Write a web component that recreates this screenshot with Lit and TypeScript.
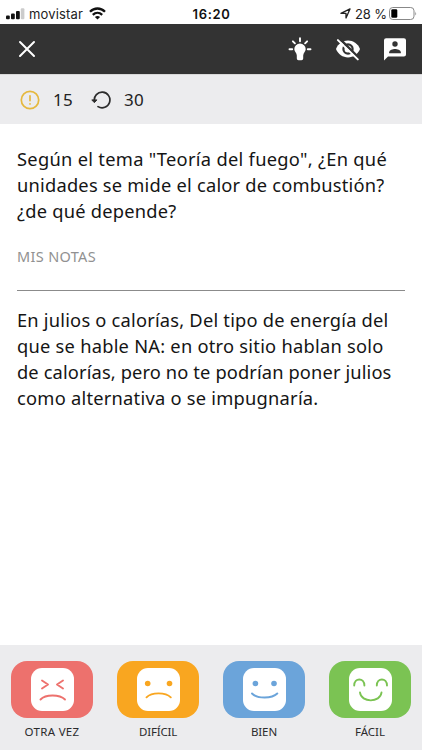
import { LitElement, html, css, svg } from "lit";
import { customElement, property, state, query } from "lit/decorators.js";

/** One line of text whose tracking is adjusted so that it fills a given width. */
@customElement("fit-line")
class FitLine extends LitElement {
  @property() text = "";
  @property({ type: Number }) width = 0;
  @state() private tracking = 0;
  @query("span") private span!: HTMLSpanElement;

  static styles = css`
    :host { display: block; white-space: nowrap; }
    span { display: inline-block; }
  `;

  firstUpdated() {
    const natural = this.span.getBoundingClientRect().width;
    this.tracking = (this.width - natural) / this.text.length;
  }

  render() {
    return html`<span style="letter-spacing:${this.tracking}px">${this.text}</span>`;
  }
}

const line = (text: string, width: number) =>
  html`<fit-line .text=${text} .width=${width}></fit-line>`;

const question: [string, number][] = [
  ['Según el tema "Teoría del fuego", ¿En qué', 370],
  ["unidades se mide el calor de combustión?", 367.5],
  ["¿de qué depende?", 159.5],
];

const answer: [string, number][] = [
  ["En julios o calorías, Del tipo de energía del", 371.5],
  ["que se hable NA: en otro sitio hablan solo", 366.5],
  ["de calorías, pero no te podrían poner julios", 374.5],
  ["como alternativa o se impugnaría.", 301.5],
];

const grades = [
  {
    label: "OTRA VEZ", width: 55, tone: "again",
    face: svg`<path d="M11 12.5l6 4-6 4M32 12.5l-6 4 6 4"/><path d="M9.5 31.5c5-5.3 19-5.3 24.5 0"/>`,
  },
  {
    label: "DIFÍCIL", width: 38, tone: "hard",
    face: svg`<circle class="dot" cx="10.7" cy="15.5" r="2.8"/><circle class="dot" cx="32.5" cy="15.5" r="2.8"/><path d="M9.5 29.3c5-5.3 19-5.3 24.3 0"/>`,
  },
  {
    label: "BIEN", width: 26, tone: "good",
    face: svg`<circle class="dot" cx="12.4" cy="15.5" r="2.8"/><circle class="dot" cx="31" cy="15.5" r="2.8"/><path d="M9 25.5c5 5.3 20 5.3 25.3 0"/>`,
  },
  {
    label: "FÁCIL", width: 30, tone: "easy",
    face: svg`<path d="M5.2 17.6c0-8.2 10.2-8.2 10.2 0M27.8 17.6c0-8.2 10.2-8.2 10.2 0M11 24.5c1.2 10.5 20.3 10.5 21.5 0"/>`,
  },
];

@customElement("app-root")
class AppRoot extends LitElement {
  static styles = css`
    :host {
      display: flex; flex-direction: column; height: 750px; width: 422px;
      box-sizing: border-box; background: #fff; color: #1c1c1e; overflow: hidden;
      font-family: Inter, "Liberation Sans", sans-serif;
    }
    svg { display: block; flex: none; }
    .status {
      height: 24px; flex: none; display: grid; grid-template-columns: 1fr auto 1fr;
      align-items: center; padding: 3px 5px 0 6px; box-sizing: border-box;
      font-size: 13px; line-height: 20px; color: #222;
    }
    .left, .right { display: flex; align-items: center; }
    .right { justify-content: flex-end; }
    .signal { margin-right: 4px; }
    .wifi { margin-left: 6px; }
    .arrow { margin-right: 4px; }
    .battery { margin-left: 2px; }
    .time { font-weight: 600; color: #111; }
    .bar {
      height: 50px; flex: none; background: #333; display: flex; align-items: center;
      padding: 0 15px 0 18px; color: #fff;
    }
    .actions { margin-left: auto; display: flex; align-items: center; gap: 21.5px; }
    .counts {
      height: 50px; flex: none; background: #ececee; display: flex; align-items: center;
      padding-left: 20px; box-sizing: border-box; border-top: 1px solid #d8d8d8;
      font: 17px/24px "Noto Sans", sans-serif; color: #222;
    }
    .counts fit-line.first { margin: 0 18px 0 13px; }
    .counts fit-line.second { margin-left: 13px; }
    main { flex: 1; padding: 22px 17px 0; }
    .copy { font-family: "Noto Sans", sans-serif; font-size: 18.3px; line-height: 26px; color: #151515; }
    .notes { font-family: "Noto Sans", sans-serif; font-size: 14.5px; line-height: 20px; color: #919191; margin-top: 22px; padding-bottom: 24px; border-bottom: 1px solid #8b8b8b; }
    .answer { margin-top: 16px; }
    footer {
      height: 105px; flex: none; background: #ececee; display: grid; box-sizing: border-box;
      grid-template-columns: repeat(4, 82px); justify-content: space-between;
      padding: 16px 11px 0;
    }
    .grade { display: flex; flex-direction: column; align-items: center; }
    .tile { width: 82px; height: 57px; border-radius: 16px; display: grid; place-items: center; }
    .face { background: #fff; border-radius: 11px; }
    .face path { fill: none; stroke: currentColor; stroke-width: 1.9; stroke-linecap: round; stroke-linejoin: round; }
    .dot { fill: currentColor; }
    .again { color: #ed716d; background: #ed716d; }
    .hard { color: #f9a620; background: #f9a620; }
    .good { color: #6ba4da; background: #6ba4da; }
    .easy { color: #7bc353; background: #7bc353; }
    .label { margin-top: 6px; font-size: 11.5px; line-height: 16px; font-family: "Noto Sans", sans-serif; color: #2b2b2d; }
  `;

  render() {
    return html`
      <div class="status">
        <div class="left">
          <svg class="signal" width="19" height="12" viewBox="0 0 19 12" fill="#111">
            <rect x="0" y="7.5" width="3.8" height="3.8" rx="1"/><rect x="5" y="5.5" width="3.8" height="5.8" rx="1"/>
            <rect x="10" y="3" width="3.8" height="8.3" rx="1"/><rect x="14.8" y="0.3" width="3.6" height="11" rx="1" fill="#ccc"/>
          </svg>
          ${line("movistar", 54)}
          <svg class="wifi" width="17" height="13" viewBox="0 0 17 13" fill="none" stroke="#111" stroke-width="2.3">
            <path d="M1 4.8c4.3-4.4 10.7-4.4 15 0M3.8 7.8c2.8-2.7 6.6-2.7 9.4 0"/><path d="M8.5 12.6L5.9 9.9c1.5-1.3 3.7-1.3 5.2 0z" fill="#111" stroke="none"/>
          </svg>
        </div>
        <div class="time">${line("16:20", 38)}</div>
        <div class="right">
          <svg class="arrow" width="11" height="11" viewBox="0 0 11 11" fill="none" stroke="#222" stroke-width="1.3" stroke-linejoin="round">
            <path d="M.9 5.3L10 .9 6 10V5.3z"/>
          </svg>
          ${line("28 %", 32)}
          <svg class="battery" width="28" height="13" viewBox="0 0 28 13">
            <rect x=".5" y=".5" width="24.5" height="12" rx="3.3" fill="#fff" stroke="#888"/>
            <rect x="2.3" y="2.2" width="6" height="8.6" rx="1.3" fill="#000"/><path d="M26.3 4.5q1.5 2 0 4z" fill="#888"/>
          </svg>
        </div>
      </div>

      <div class="bar">
        <svg width="18" height="18" viewBox="0 0 18 18" stroke="#fff" stroke-width="2" stroke-linecap="round"><path d="M2 2l14 14M16 2L2 16"/></svg>
        <div class="actions">
          <svg width="24" height="24" viewBox="0 0 24 24">
            <path fill="#fff" d="M12 6.5A5.7 5.7 0 0 0 6.3 12.2C6.3 14.5 8.8 16 8.8 18.5V21.5Q8.8 23.2 10.5 23.2H13.500Q15.200 23.200 15.200 21.500V18.500C15.200 16 17.700 14.500 17.700 12.200A5.700 5.700 0 0 0 12 6.500Z"/>
            <path d="M12 1.2v3M4.9 4.3l2 2M19.1 4.3l-2 2M1.5 12.3h2.7M19.8 12.3h2.7" stroke="#fff" stroke-width="1.9" stroke-linecap="round"/>
          </svg>
          <svg width="28" height="26" viewBox="0 0 28 26">
            <path fill="#fff" d="M2 13C4.2 7.7 8.8 4.6 14 4.6S23.8 7.7 26 13c-2.2 5.3-6.8 8.4-12 8.4S4.2 18.3 2 13z"/>
            <circle cx="14" cy="13" r="4.6" fill="none" stroke="#333" stroke-width="2.2"/>
            <path d="M5.3 2.4L25.3 22.4" stroke="#333" stroke-width="2.6"/>
            <path d="M3.9 4.1L23.8 23.4" stroke="#fff" stroke-width="2" stroke-linecap="round"/>
          </svg>
          <svg width="24" height="24" viewBox="0 0 24 24">
            <path fill="#fff" d="M3.1 1.2h17.8a2.1 2.1 0 0 1 2.1 2.1v14.1a2.1 2.1 0 0 1-2.1 2.1H5L1 23.5V3.3a2.1 2.1 0 0 1 2.1-2.1z"/>
            <circle cx="12" cy="7" r="2.7" fill="#333"/><path fill="#333" d="M6.2 16.2v-1c0-2 3.7-3.1 5.8-3.1s5.8 1.1 5.8 3.1v1z"/>
          </svg>
        </div>
      </div>

      <div class="counts">
        <svg width="20" height="20" viewBox="0 0 20 20" fill="none" stroke="#e5b83e" stroke-width="1.7" stroke-linecap="round">
          <circle cx="10" cy="10" r="8.7"/><path d="M10 5.8v4.8M10 13.8v.1"/>
        </svg>
        <fit-line class="first" .text=${"15"} .width=${20}></fit-line>
        <svg width="20" height="20" viewBox="0 0 20 20" fill="none" stroke="#2c2c2c" stroke-width="1.7" stroke-linecap="round">
          <path d="M3.4 11.2A7.8 7.8 0 1 1 7 16.6"/><path d="M1.2 9.9h4.7l-2.3 2.5z" fill="#2c2c2c" stroke-width="1"/>
        </svg>
        <fit-line class="second" .text=${"30"} .width=${20}></fit-line>
      </div>

      <main>
        <div class="copy">${question.map(([t, w]) => line(t, w))}</div>
        <div class="notes">${line("MIS NOTAS", 79)}</div>
        <div class="copy answer">${answer.map(([t, w]) => line(t, w))}</div>
      </main>

      <footer>
        ${grades.map((g) => html`
          <div class="grade">
            <div class="tile ${g.tone}">
              <svg class="face" width="43" height="43" viewBox="0 0 43 43">${g.face}</svg>
            </div>
            <div class="label">${line(g.label, g.width)}</div>
          </div>`)}
      </footer>
    `;
  }
}
